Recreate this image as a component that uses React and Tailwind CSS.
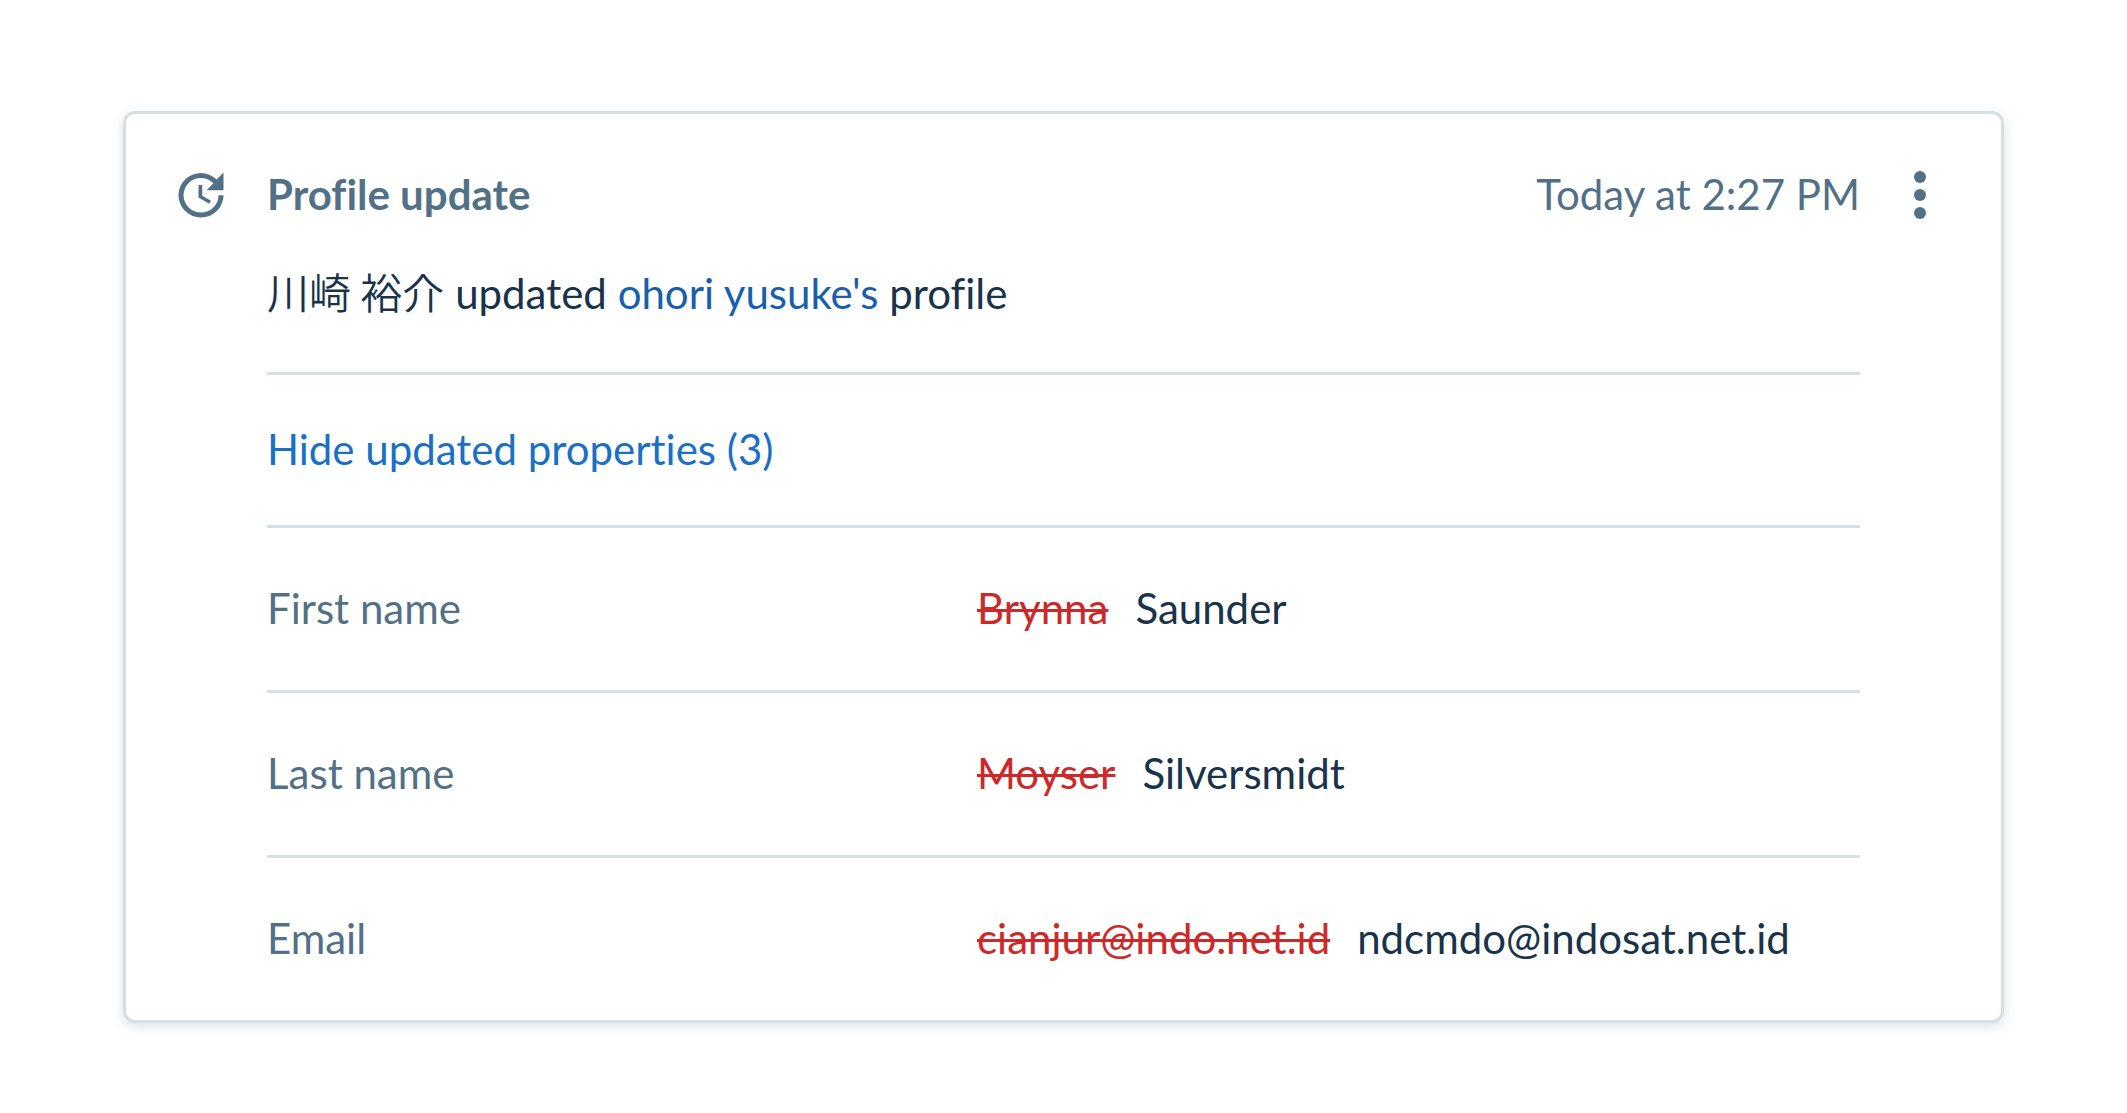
import { MdUpdate } from "react-icons/md";

const changes = [
  { label: "First name", before: "Brynna", after: "Saunder" },
  { label: "Last name", before: "Moyser", after: "Silversmidt" },
  { label: "Email", before: "cianjur@indo.net.id", after: "ndcmdo@indosat.net.id" },
];

export default function App() {
  return (
    <main className="min-h-screen bg-white px-[123px] pt-[111px] pb-[90px] font-[Lato,'Noto_Sans_CJK_JP',sans-serif] text-[42px] leading-[60px] text-[#19334a] [font-variant-ligatures:none]">
      <article className="rounded-xl border-3 border-[#d5dfe6] bg-white pr-[51px] pl-[45px] shadow-[0_4px_12px_rgba(25,90,125,0.16)]">
        <header className="flex items-center pt-[50px] text-[#527187]">
          <MdUpdate className="size-[60px]" aria-hidden="true" />
          <h1 className="ml-[36px] pb-[2px] font-bold">Profile update</h1>
          <time className="ml-auto pb-[2px]">Today at 2:27 PM</time>
          <button
            type="button"
            aria-label="More options"
            className="ml-[30px] flex h-[60px] w-[60px] flex-col items-center justify-center gap-[6px]"
          >
            <span className="size-3 rounded-full bg-current" />
            <span className="size-3 rounded-full bg-current" />
            <span className="size-3 rounded-full bg-current" />
          </button>
        </header>

        <div className="mr-[90px] ml-[96px]">
          <p className="border-b-3 border-[#d5dfe6] pt-[37px] pb-[49px]">
            <span className="font-['Noto_Sans_CJK_JP',sans-serif] leading-none font-[350]">川崎 裕介</span> updated{" "}
            <a href="#profile" className="text-[#1860ac]">
              ohori yusuke's
            </a>{" "}
            profile
          </p>
          <div className="flex border-b-3 border-[#d5dfe6] pt-[44px] pb-[46px]">
            <button type="button" aria-expanded="true" className="text-[#1a70c4]">
              Hide updated properties (3)
            </button>
          </div>
          <table className="w-full table-fixed">
            <tbody>
              {changes.map((change) => (
                <tr key={change.label} className="border-b-3 border-[#d5dfe6] last:border-b-0">
                  <th scope="row" className="w-[710px] pt-[50px] pb-[52px] text-left font-normal text-[#527187]">
                    {change.label}
                  </th>
                  <td className="pt-[50px] pb-[52px] whitespace-nowrap">
                    <del className="mr-[27px] text-[#cc2a2a] decoration-3">{change.before}</del>
                    <ins className="no-underline">{change.after}</ins>
                  </td>
                </tr>
              ))}
            </tbody>
          </table>
        </div>
      </article>
    </main>
  );
}
